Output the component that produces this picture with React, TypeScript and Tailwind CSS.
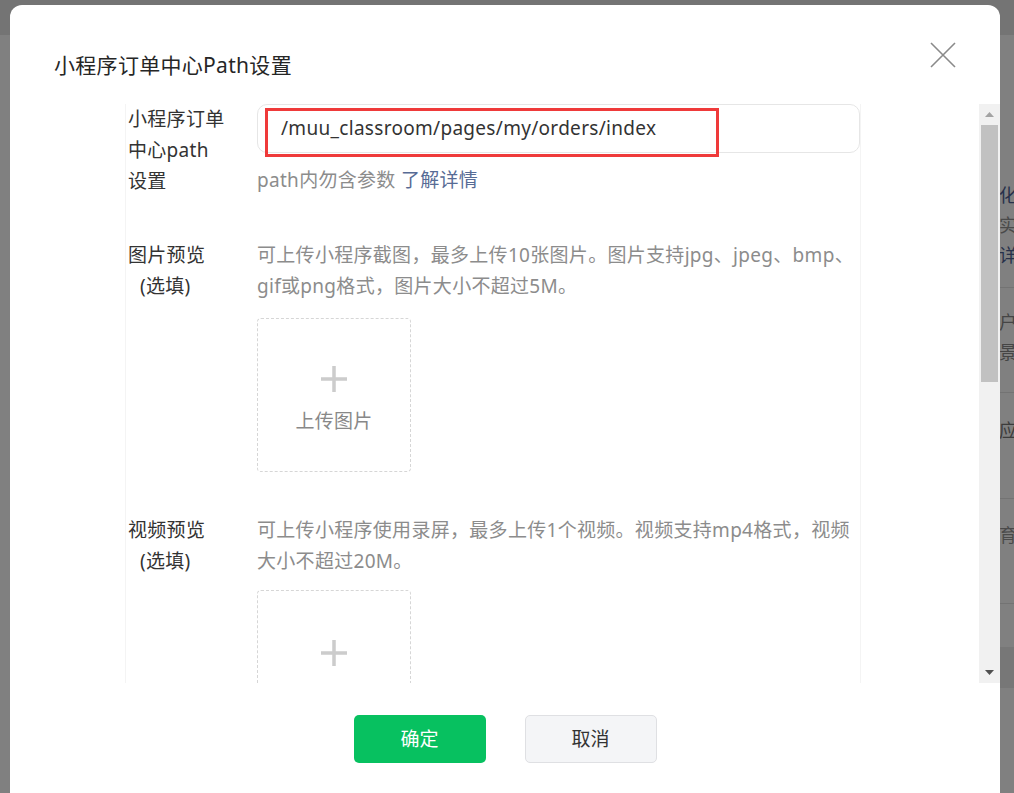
import React from "react";

const font = "font-['Noto_Sans','Noto_Sans_CJK_SC',sans-serif]";

const UploadBox = ({ label, top }: { label?: string; top: string }) => (
  <div className={`w-[154px] h-[154px] rounded-[4px] border border-dashed border-[#d6d6d6] flex flex-col items-center ${top}`}>
    <svg width="28" height="28" viewBox="0 0 28 28" className="shrink-0">
      <path d="M14 1v26M1 14h26" stroke="#cccccc" strokeWidth="3.5" />
    </svg>
    {label && <div className="mt-[16px] text-[19px] leading-[24px] text-[#888888]">{label}</div>}
  </div>
);

const Backdrop = () => (
  <div className="flex flex-col h-full bg-[#808080]">
    <div className="h-[35px] bg-[#747474]" />
    <div className="flex-1 flex">
      <div className="flex-1" />
      <div className="w-[15px] overflow-hidden whitespace-nowrap text-[18px] leading-[30px]">
        <div className="h-[253px] pt-[145px] border-b border-[#737373]">
          <div className="text-[#27314b]">化</div>
          <div className="text-[#4a4a4a]">实</div>
          <div className="text-[#27314b]">详</div>
        </div>
        <div className="h-[105px] pt-[19px] border-b border-[#737373] text-[#454545]">
          <div>户</div>
          <div>景</div>
        </div>
        <div className="h-[106px] pt-[22px] border-b border-[#737373] text-[#3c3c3c]">
          <div>应</div>
        </div>
        <div className="h-[105px] pt-[21px] border-b border-[#737373] text-[#4a4a4a]">
          <div>育</div>
        </div>
        <div className="h-[43px]" />
        <div className="h-[41px] bg-[#777777]" />
      </div>
    </div>
  </div>
);

export default function App() {
  return (
    <div className={`relative h-[793px] w-full overflow-hidden ${font}`}>
      <Backdrop />

      {/* Dialog */}
      <div className="absolute left-[10px] top-[5px] w-[990px] h-[820px] rounded-[12px] bg-white">
        <div className="h-[99px] flex justify-between items-start pt-[37px] pl-[44px] pr-[44px]">
          <div className="mt-[9px] text-[21px] leading-[28px] tracking-[0.3px] text-[#262626]">小程序订单中心Path设置</div>
          <svg width="26" height="26" viewBox="0 0 26 26">
            <path d="M1 1l24 24M25 1L1 25" stroke="#8a8a8a" strokeWidth="1.6" />
          </svg>
        </div>

        <div className="h-[579px] flex ml-[115px]">
          <div className="w-[736px] overflow-hidden border-x border-[#f4f4f4] text-[19px] leading-[31px] tracking-[0.3px]">
            {/* Path row */}
            <div className="flex">
              <div className="w-[131px] pl-[2px] text-[#333333]">
                小程序订单<br />中心path<br />设置
              </div>
              <div className="w-[603px]">
                <div className="relative">
                  <div className="h-[49px] rounded-[10px] border border-[#e6e6e6] px-[23px] flex items-center text-[#333333]">
                    /muu_classroom/pages/my/orders/index
                  </div>
                  <div className="absolute left-[8px] top-[4px] w-[454px] h-[49px] border-[3px] border-[#ef3a3a]" />
                </div>
                <div className="mt-[12px] text-[#8c8c8c]">
                  path内勿含参数 <span className="text-[#576b95]">了解详情</span>
                </div>
              </div>
            </div>

            {/* Image row */}
            <div className="flex mt-[43px]">
              <div className="w-[131px] pl-[2px] text-[#333333]">
                <div>图片预览</div>
                <div className="pl-[12px]">(选填)</div>
              </div>
              <div className="w-[603px]">
                <div className="text-[#8c8c8c] whitespace-nowrap">
                  可上传小程序截图，最多上传10张图片。图片支持jpg、jpeg、bmp、<br />gif或png格式，图片大小不超过5M。
                </div>
                <div className="mt-[16px]">
                  <UploadBox label="上传图片" top="pt-[46px]" />
                </div>
              </div>
            </div>

            {/* Video row */}
            <div className="flex mt-[43px]">
              <div className="w-[131px] pl-[2px] text-[#333333]">
                <div>视频预览</div>
                <div className="pl-[12px]">(选填)</div>
              </div>
              <div className="w-[603px]">
                <div className="text-[#8c8c8c] whitespace-nowrap">
                  可上传小程序使用录屏，最多上传1个视频。视频支持mp4格式，视频<br />大小不超过20M。
                </div>
                <div className="mt-[13px]">
                  <UploadBox top="pt-[48px]" />
                </div>
              </div>
            </div>
          </div>

          <div className="flex-1" />

          {/* Scrollbar */}
          <div className="w-[21px] bg-[#f1f1f1] flex flex-col">
            <div className="h-[21px] flex items-center justify-center">
              <svg width="9" height="5" viewBox="0 0 9 5">
                <path d="M0 5L4.5 0L9 5z" fill="#a3a3a3" />
              </svg>
            </div>
            <div className="h-[257px] mx-[2px] bg-[#c1c1c1]" />
            <div className="flex-1" />
            <div className="h-[21px] flex items-center justify-center">
              <svg width="9" height="5" viewBox="0 0 9 5">
                <path d="M0 0L4.5 5L9 0z" fill="#505050" />
              </svg>
            </div>
          </div>
        </div>

        {/* Footer */}
        <div className="flex justify-center gap-[39px] pt-[32px]">
          <button className="w-[132px] h-[48px] rounded-[5px] bg-[#07c160] text-white text-[19px]">确定</button>
          <button className="w-[132px] h-[48px] rounded-[5px] bg-[#f4f5f7] border border-[#dfe0e3] text-[#333333] text-[19px]">取消</button>
        </div>
      </div>
    </div>
  );
}
